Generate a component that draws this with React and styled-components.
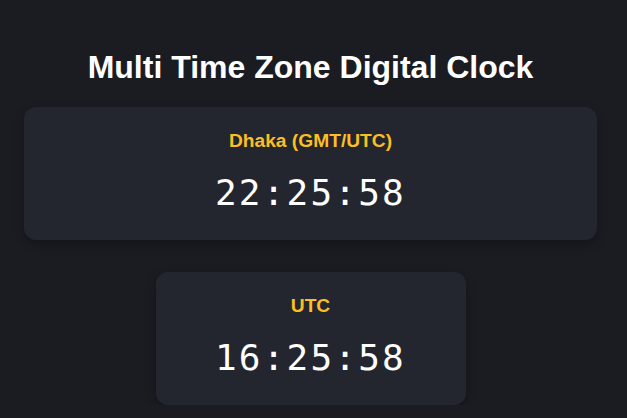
import React from "react";
import styled, { createGlobalStyle } from "styled-components";

const GlobalStyle = createGlobalStyle`
  html, body {
    margin: 0;
    padding: 0;
    background: #1a1c21;
  }
  body {
    font-family: "Liberation Sans", Arial, sans-serif;
    color: #fff;
  }
`;

const Page = styled.div`
  display: flex;
  flex-direction: column;
  align-items: center;
  padding: 48px 30px 0 24px;
`;

const Title = styled.h1`
  margin: 0 0 21px;
  font-size: 32px;
  font-weight: 700;
  line-height: 38px;
  color: #fff;
`;

const ClockList = styled.div`
  display: flex;
  flex-direction: column;
  align-items: center;
  gap: 32px;
  width: 100%;
`;

const Card = styled.div`
  box-sizing: border-box;
  width: ${(p) => p.$width};
  height: 133px;
  padding: 22px 20px;
  border-radius: 12px;
  background: #23262e;
  box-shadow: 0 4px 10px rgba(0, 0, 0, 0.25);
  display: flex;
  flex-direction: column;
  align-items: center;
`;

const Zone = styled.div`
  font-size: 19.2px;
  font-weight: 700;
  line-height: 23px;
  color: #fbbf24;
`;

const Time = styled.div`
  margin-top: 19px;
  font-family: "DejaVu Sans Mono", monospace;
  font-size: 36px;
  line-height: 44px;
  letter-spacing: 2.2px;
  color: #fff;
`;

const clocks = [
  { zone: "Dhaka (GMT/UTC)", time: "22:25:58", width: "100%" },
  { zone: "UTC", time: "16:25:58", width: "310px" },
];

export default function App() {
  return (
    <>
      <GlobalStyle />
      <Page>
        <Title>Multi Time Zone Digital Clock</Title>
        <ClockList>
          {clocks.map((c) => (
            <Card key={c.zone} $width={c.width}>
              <Zone>{c.zone}</Zone>
              <Time>{c.time}</Time>
            </Card>
          ))}
        </ClockList>
      </Page>
    </>
  );
}
